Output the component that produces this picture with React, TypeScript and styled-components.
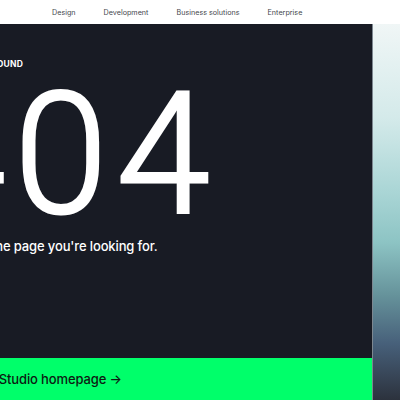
import React from "react"
import styled, { createGlobalStyle } from "styled-components"

const GlobalStyle = createGlobalStyle`
  html, body {
    margin: 0;
    padding: 0;
    background: #ffffff;
    overflow: hidden;
  }
  body {
    font-family: Inter, "Noto Sans", sans-serif;
  }
`

const Page = styled.div`
  width: 400px;
  height: 400px;
  display: flex;
  flex-direction: column;
  overflow: hidden;
`

const TopBar = styled.header`
  height: 24px;
  flex-shrink: 0;
  display: flex;
  align-items: center;
  padding-left: 52px;
  gap: 28px;
  background: #ffffff;
`

const NavLink = styled.a`
  font-size: 7.2px;
  color: #45474d;
  text-decoration: none;
`

const Body = styled.div`
  flex: 1;
  display: flex;
  min-height: 0;
`

const Panel = styled.main`
  width: 465px;
  margin-left: -93px;
  flex-shrink: 0;
  background: #181b24;
  display: flex;
  flex-direction: column;
  color: #ffffff;
`

const Content = styled.section`
  flex: 1;
  display: flex;
  flex-direction: column;
  padding-top: 35px;
`

const Eyebrow = styled.p`
  margin: 0;
  font-size: 8.5px;
  line-height: 10px;
  font-weight: 700;
  letter-spacing: 0.03em;
  text-transform: uppercase;
`

/* light face, thickened a little with a stroke */
const Code = styled.h1`
  margin: 2px 0 0 5px;
  font-family: Roboto, Inter, sans-serif;
  font-size: 168px;
  font-weight: 300;
  line-height: 1;
  letter-spacing: 9px;
  -webkit-text-stroke: 3px #ffffff;
`

const Message = styled.p`
  margin: -1px 0 0;
  font-size: 13px;
  line-height: 16px;
  font-weight: 500;
  letter-spacing: -0.01em;
`

const HomeButton = styled.a`
  height: 42px;
  flex-shrink: 0;
  display: flex;
  align-items: center;
  padding-left: 43px;
  background: #00ff6a;
  color: #0d1a12;
  font-size: 13px;
  font-weight: 500;
  text-decoration: none;
  letter-spacing: -0.01em;
`

const Backdrop = styled.aside`
  flex: 1;
  border-left: 1px solid #7d8790;
  background: linear-gradient(
    180deg,
    #f0f6f6 0%,
    #d4eaea 25%,
    #a9d5d5 45%,
    #8dc4c4 58%,
    #66939b 72%,
    #47607a 85%,
    #2c323d 100%
  );
`

const links = ["Design", "Development", "Business solutions", "Enterprise"]

function App() {
  return (
    <>
      <GlobalStyle />
      <Page>
        <TopBar>
          {links.map((l) => (
            <NavLink key={l} href="#">{l}</NavLink>
          ))}
        </TopBar>
        <Body>
          <Panel>
            <Content>
              <Eyebrow>Error · Page not found</Eyebrow>
              <Code>404</Code>
              <Message>We can't find the page you're looking for.</Message>
            </Content>
            <HomeButton href="#">Back to Studio homepage →</HomeButton>
          </Panel>
          <Backdrop />
        </Body>
      </Page>
    </>
  )
}

export default App
